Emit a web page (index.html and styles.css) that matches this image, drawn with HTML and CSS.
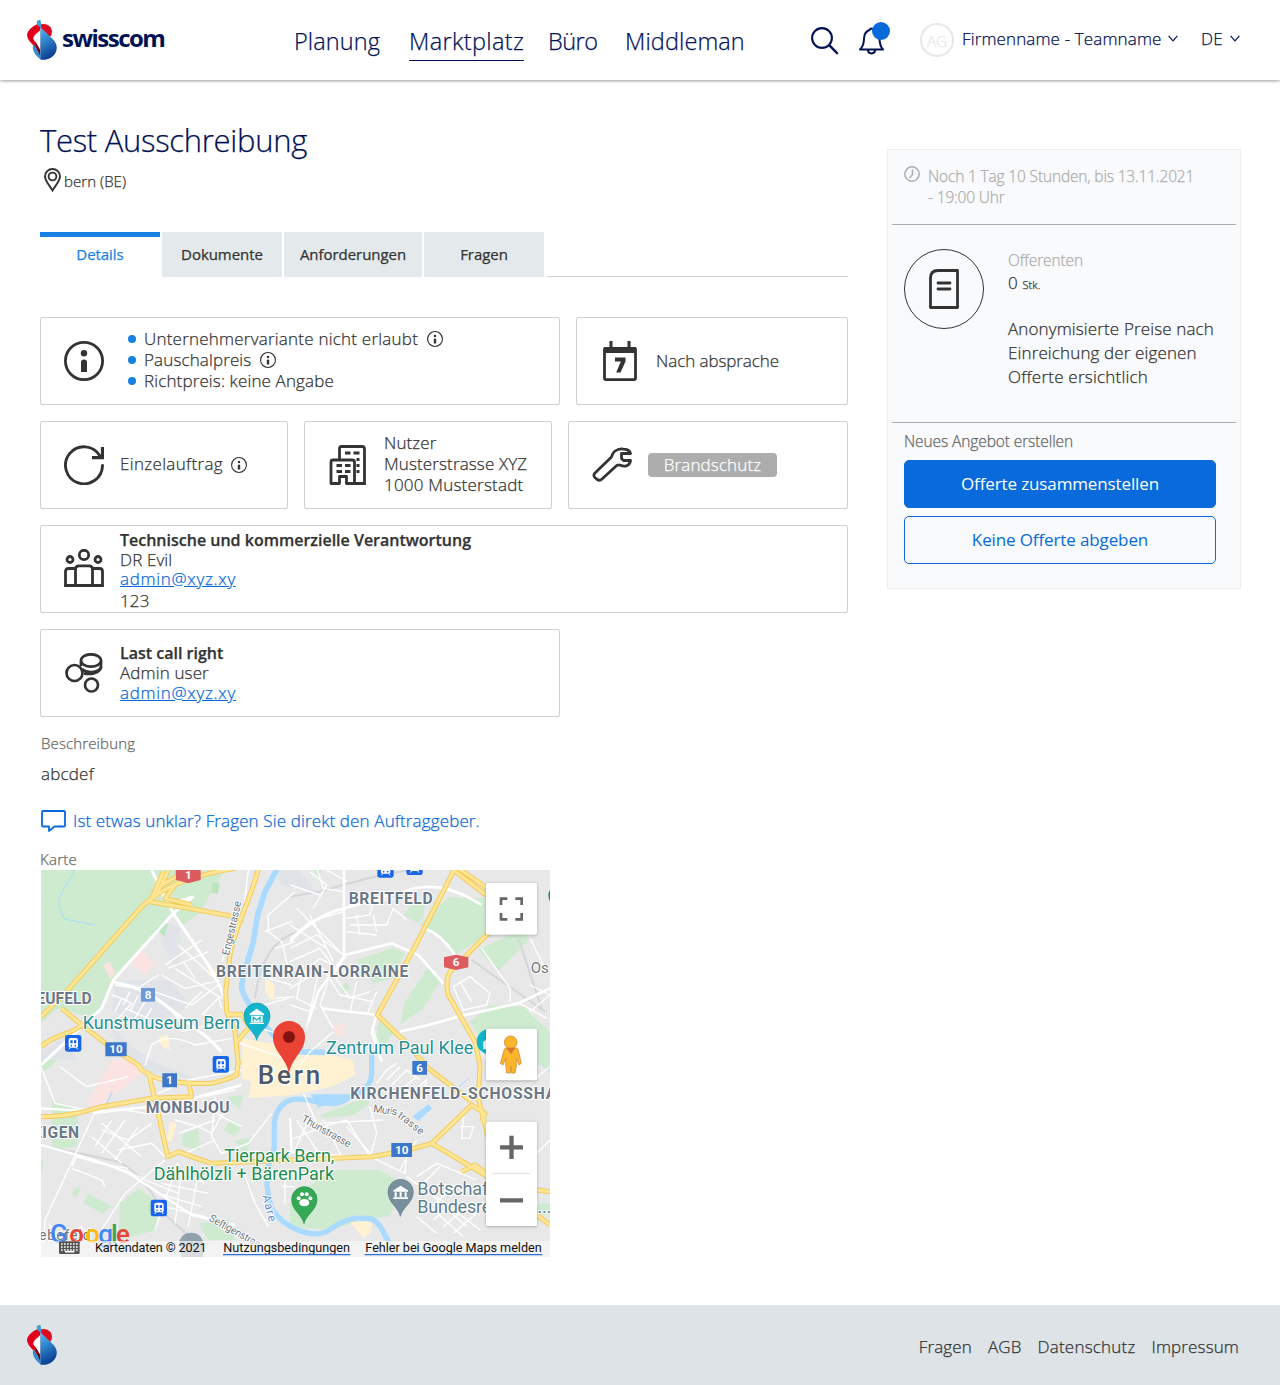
FILE: index.html
```html
<!DOCTYPE html>
<html lang="de">
<head>
<meta charset="utf-8">
<title>Test Ausschreibung</title>
<link rel="stylesheet" href="styles.css">
</head>
<body>
<svg class="defs" width="0" height="0">
  <defs>
    <linearGradient id="blue" x1="0" y1="0" x2="0.3" y2="1"><stop offset="0" stop-color="#5cb8ea"/><stop offset=".45" stop-color="#2f86cc"/><stop offset="1" stop-color="#0a3f93"/></linearGradient>
    <symbol id="logo" viewBox="81 60 90 120">
      <path d="M118 72C104 72 82 90 81 105C82 122 98 130 106 146L121 160V84Z" fill="#e2001a"/>
      <path d="M116 76C134 66 156 76 156 96Q156 106 150 111L121 84Z" fill="#dd0b22"/>
      <path d="M121 90C112 100 100 106 100 116C102 124 110 126 112 136L121 150Z" fill="#fff"/>
      <path d="M100 132C96 144 99 160 121 178V164C112 156 110 142 100 132Z" fill="#2f8fd4"/>
      <path d="M103 126C116 136 120 146 121 166C112 158 114 144 103 126Z" fill="#5e0a10"/>
      <path d="M121 82L158 117C174 132 174 152 160 167C149 178 132 181 121 179Z" fill="url(#blue)"/>
      <path d="M110 66C111 60 122 58 122 62L125 88L119 80C113 78 110 72 110 66Z" fill="#3f9fd8"/>
    </symbol>
    <symbol id="info" viewBox="0 0 40 40">
      <circle cx="20" cy="20" r="18.6" fill="none" stroke="currentColor" stroke-width="2.8"/>
      <circle cx="20" cy="12.3" r="3.2"/><path d="M17 31V21Q17 18.5 20 18.5T23 21V31Z"/>
    </symbol>
    <symbol id="chev" viewBox="0 0 10 7"><path d="M.6 .8L5 5.8L9.4 .8" fill="none" stroke="currentColor" stroke-width="1.2"/></symbol>
  </defs>
</svg>

<header class="header">
  <a class="brand"><svg class="brand-mark"><use href="#logo"/></svg><span class="brand-name">swisscom</span></a>
  <nav class="nav">
    <a>Planung</a><a class="nav-active">Marktplatz</a><a class="nav-tight">Büro</a><a>Middleman</a>
  </nav>
  <div class="tools">
    <svg class="search" viewBox="0 0 28 28" fill="none" stroke="currentColor" stroke-width="2.1"><circle cx="11" cy="11" r="9.9"/><path d="M18.2 18.2L26.8 26.8" stroke-width="2.4"/></svg>
    <div class="bell"><svg viewBox="0 0 28 30" fill="none" stroke="currentColor" stroke-width="2"><path d="M2 23.500H25C21.500 20 21.800 16 21.300 11C20.600 6 18 4.500 15.500 4C14.500 2 12.500 2 11.500 4C9 5 6.600 7 6.200 11C5.700 17 5.500 20 2 23.500Z" stroke-linejoin="round"/><path d="M10 24C10 28.500 17 28.500 17 24"/></svg><i class="badge"></i></div>
    <span class="avatar">AG</span>
    <a class="account"><span>Firmenname - Teamname</span><svg class="chev"><use href="#chev"/></svg></a>
    <a class="lang"><span>DE</span><svg class="chev"><use href="#chev"/></svg></a>
  </div>
</header>

<main class="page">
  <section class="content">
    <h1 class="title">Test Ausschreibung</h1>
    <p class="place"><svg class="pin" viewBox="0 0 17 24" fill="none" stroke="currentColor" stroke-width="1.900"><path d="M8.500 22.500C6 18 1 13 1 8.500A7.500 7.500 0 0 1 16 8.500C16 13 11 18 8.500 22.500Z"/><circle cx="8.500" cy="8.500" r="3.900"/></svg><span>bern (BE)</span></p>
    <nav class="tabs">
      <a class="tab tab-on">Details</a><a class="tab">Dokumente</a><a class="tab tab-wide">Anforderungen</a><a class="tab">Fragen</a><i class="tabs-line"></i>
    </nav>

    <div class="cards">
      <div class="row row-a">
        <article class="card"><svg class="icon"><use href="#info"/></svg>
          <ul class="facts"><li class="spaced">Unternehmervariante nicht erlaubt<svg class="hint"><use href="#info"/></svg></li><li>Pauschalpreis<svg class="hint"><use href="#info"/></svg></li><li>Richtpreis: keine Angabe</li></ul>
        </article>
        <article class="card"><svg class="icon" viewBox="0 0 40 40"><path d="M4.500 8H35.500V37Q35.500 38.600 34 38.600H6Q4.500 38.600 4.500 37Z" fill="none" stroke="currentColor" stroke-width="2.800" stroke-linejoin="round"/><path d="M4 6H36V12H4ZM9.500 0H12.500V7H9.500ZM27.500 0H30.500V7H27.500Z"/><path d="M15 16.500H25.500V20.500L20.500 31.500H16.200L20.800 20.500H15Z"/></svg><p class="tight">Nach absprache</p></article>
      </div>
      <div class="row row-b">
        <article class="card"><svg class="icon" viewBox="0 0 40 40" fill="none" stroke="currentColor" stroke-width="2.900"><path d="M38.500 20.500A18.500 18.500 0 1 1 36 11" stroke-linecap="round"/><path d="M38.500 2V12.700H28" stroke-width="3.200"/></svg><p class="job">Einzelauftrag<svg class="hint"><use href="#info"/></svg></p></article>
        <article class="card"><svg class="icon" viewBox="0 0 40 40" fill="none" stroke="currentColor" stroke-width="2.800"><path d="M11.500 14V3.500Q11.500 1.500 13.500 1.500H34Q36.500 1.500 36.500 4V38.500H26.500"/><path d="M3 38.500V17Q3 15 5 15H24Q26.500 15 26.500 17V38.500H18.500V31.500H11.500V38.500Z" stroke-linejoin="round"/><path d="M17 8H22.500M25.500 8H31.500M28.500 14.500H31.500M28.500 20.500H31.500M28.500 26.500H31.500M8.500 20.500H14M17 20.500H22.500M8.500 26.500H14M17 26.500H22.500"/></svg><p class="address">Nutzer<br>Musterstrasse XYZ<br><span class="spaced">1000 Musterstadt</span></p></article>
        <article class="card"><svg class="icon" viewBox="0 0 40 40" fill="none" stroke="currentColor" stroke-width="2.800" stroke-linejoin="round"><path d="M38.500 8.500H29.500V13.500L31.500 15.500H38.500C38 20 33.500 22.500 28.500 20.200H25L10 34C8 36 6 35.500 4 33.500Q0 30.500 3.500 27.500L19.500 12C21 6 26 3.500 31 4C35 4.300 38 5.500 38.500 8.500Z"/></svg><p class="tag">Brandschutz</p></article>
      </div>
      <div class="row">
        <article class="card contact"><svg class="icon" viewBox="0 0 40 40" fill="none" stroke="currentColor" stroke-width="2.800"><circle cx="20" cy="6" r="4.700"/><circle cx="6" cy="10.500" r="3"/><circle cx="34" cy="10.500" r="3"/><path d="M11.500 36V20Q11.500 16.800 15 16.800H25Q28.500 16.800 28.500 20V36M11 19.500H4.500Q1.500 19.500 1.500 22.500V36.500H38.500V22.500Q38.500 19.500 35.500 19.500H29"/></svg><div class="lead"><b>Technische und kommerzielle Verantwortung</b><span>DR Evil</span><a>admin@xyz.xy</a><span>123</span></div></article>
      </div>
      <div class="row row-d">
        <article class="card contact"><svg class="icon" viewBox="0 0 40 40" fill="none" stroke="currentColor" stroke-width="2.700"><circle cx="10.500" cy="20" r="8"/><circle cx="27.500" cy="32" r="6.500"/><ellipse cx="27" cy="7.500" rx="10" ry="6.200"/><path d="M37 8V13C37 19 24 21.500 18 16M37 13V15C35 20 27 22 20 20.500M17 8V13"/></svg><div class="lastcall"><b>Last call right</b><span>Admin user</span><a>admin@xyz.xy</a></div></article>
      </div>
    </div>

    <h2 class="label desc-label">Beschreibung</h2>
    <p class="desc">abcdef</p>
    <a class="ask"><svg viewBox="0 0 25 22" fill="none" stroke="currentColor" stroke-width="1.800" stroke-linejoin="round"><path d="M2 1H23Q24 1 24 2V15.500Q24 16.500 23 16.500H13.500L8 21V16.500H2Q1 16.500 1 15.500V2Q1 1 2 1Z"/></svg><span>Ist etwas unklar? Fragen Sie direkt den Auftraggeber.</span></a>
    <h2 class="label map-label">Karte</h2>

    <svg class="map" viewBox="18 15 1527 1161">
      <rect x="18" y="15" width="1527" height="1161" fill="#e8e8e8"/>
      <g class="green">
        <path d="M18 15H570L525 90L495 145L440 182L415 145L235 345L200 430L160 460L110 440L70 430L18 475Z"/>
        <path d="M362 190L395 175L425 200L418 224L385 212ZM410 230L425 218L438 235L425 250ZM532 55L555 52L548 88L530 82Z" fill="#b9e6bf"/>
        <g transform="translate(765)">
          <path d="M340 150L370 115L405 115L400 160L385 175ZM475 97L590 100V210L500 268L445 205L390 180ZM565 255L680 200L720 220L625 318ZM200 285L310 248L345 265L310 340L250 355ZM150 370L170 350L180 370L160 385ZM330 480L345 410L415 305L450 350L400 430ZM540 470L600 420L700 425L780 500V600H600L570 520ZM260 490L275 455L325 500L270 530ZM250 500L300 520L270 560ZM70 15H95L85 40Z"/>
        </g>
        <g transform="translate(0 585)">
          <path d="M50 120L130 150L125 260L50 265ZM18 0L70 0L20 40ZM18 290Q30 320 20 340ZM125 380L138 390L122 412L110 400ZM160 400L230 440L205 462L145 430ZM255 430L310 385L365 425V510L250 540ZM440 225L490 205L495 270L445 260ZM565 210L590 180L620 200L600 230ZM575 110L625 105L615 150ZM600 240L650 235L630 290ZM490 490L585 480L600 540H520Z"/>
        </g>
        <g transform="translate(765 585)"><path d="M80 360L130 330H270L335 370L300 470L235 475L120 510L0 500V430ZM90 165L220 115L240 130L190 165L110 175ZM740 0H780V40ZM745 430H780V465H740Z"/></g>
      </g>
      <g fill="#fbe3e1">
        <path d="M300 270L325 258L358 300L330 330L295 300ZM205 300L225 290L240 325L225 340ZM230 585L310 585L330 620L235 690L190 730L155 715ZM890 485L930 475L925 510L900 512Z"/>
      </g>
      <g fill="#e0e3e8"><path d="M400 170L435 190V330L410 290L380 240ZM240 345L400 345L470 420L360 480L230 440ZM230 490L340 585L480 640L340 625L250 560ZM18 560L80 520L130 585H18ZM720 15H790L850 90L740 60Z"/></g>
      <g fill="#fff2d3">
        <path d="M620 520L765 545L955 585L960 630L890 665L770 690L640 700L650 650L620 640ZM690 340L720 360L715 410L690 380ZM405 770L425 775L410 830L395 825ZM370 515L400 510L405 555L380 545ZM945 1070L1010 1070V1100L985 1120Z"/>
      </g>
      <path d="M765 95L850 80L1000 40L1120 15M1310 285L1530 440M660 400Q680 230 790 200M18 840L250 890Q330 930 380 1040L470 1120M1450 220L1520 430" fill="none" stroke="#d4d6d9" stroke-width="6"/>
      <g fill="none" stroke="#aadaff">
        <path d="M118 15C100 60 65 90 72 120L88 162L180 180M1300 640L1245 690" stroke-width="3"/>
        <path d="M725 15L690 80L668 150L655 230C640 290 620 330 620 370C635 420 680 470 715 510L770 560L870 562" stroke-width="17"/>
        <path d="M1010 560V625C1010 680 950 690 930 705C880 735 820 690 765 705C730 720 717 750 718 790V850C690 910 690 970 710 1030C745 1090 830 1120 875 1100C930 1060 960 1055 1010 1062C1050 1080 1050 1140 1090 1160H1160" stroke-width="16"/>
        <path d="M1135 755L1180 720L1188 730L1150 765ZM830 690L960 690L850 725Z" fill="#aadaff" stroke-width="4"/>
        <path d="M215 715L232 680" stroke-width="4"/>
      </g>
      <g class="minor">
        <path d="M390 300L500 225M400 310L520 260M430 240L540 340M470 220L510 290L545 350M445 290L480 340M420 310L560 400M380 330L450 370L540 350M330 370L470 420L550 360M450 430L500 380M240 360L300 370L380 410L440 470M230 390L260 400L240 440M260 400L290 415L250 460M285 380L265 420M310 390L285 440M330 410L300 460M350 430L320 480M270 430L340 460M300 375L370 330M330 600L350 540Q400 500 480 540L590 520M440 500L560 470M500 450L550 400L560 430M640 15L625 150L560 290M780 80L700 150L700 200L740 230L765 330M690 200L770 170M720 250L780 230M700 340L770 360M720 400L780 395M650 430L760 400M600 530L780 590M640 480L780 520"/>
        <g transform="translate(765)"><path d="M0 220L60 170L160 140M60 20L110 60L70 130M80 10L100 70L160 80M0 180L110 250M20 130L150 260M60 150L130 290M0 250L80 210L160 270M0 290L90 250L150 330M20 340L90 280L200 340M0 370L100 310L150 390M40 300L20 400L80 430M90 300L60 440M130 300L90 420L130 490M0 420L60 440L50 490M170 270L130 330L180 400L240 380M170 160L240 150L250 110L330 100M180 180H290L310 130L350 165M170 200L260 210M200 150L210 210M250 150L260 200M0 60L90 90M110 15L170 50M260 380L230 450M200 350L180 440M150 390L250 410M490 365L540 335L600 385L590 420L520 435ZM510 350L545 410M575 250L660 370V410M690 415L770 460M720 360L780 390L720 440M720 220L760 300M250 490L270 560M560 540L600 600M30 600L60 560L130 500"/></g>
        <g transform="translate(0 585)"><path d="M18 20L60 130L180 155M75 20L155 80L280 50M180 160L270 150L330 160H380M180 155L30 480M200 190L320 290M170 230L260 310M230 180L180 260M270 180L200 280M310 200L240 300M200 210L280 240L350 190M250 270L350 250L390 290M110 320L125 290L190 310L280 325M110 325L200 360L210 380M270 330L330 360L430 400M390 300L270 400L180 540M430 310L390 420L360 510M380 370L520 400M370 400L500 440M350 430L510 470M410 320L510 370M440 330L420 490M490 340L460 500M400 160L430 120L510 110L600 90M420 180L490 200L530 220L570 150M540 110L530 230L560 280L640 250L710 160M430 220L540 180M450 280L540 240M500 120L560 170L620 200M620 320L660 430L700 500M730 350H780M740 380H780M750 330V430M30 480L25 590M40 490L80 540L40 590M90 520L140 500L200 590M370 100L460 60L620 30"/></g>
        <g transform="translate(765 585)"><path d="M40 100L80 190L280 180M0 240L100 200L170 180L240 290L345 340L350 285M20 180L100 300M60 170L10 280M100 180L160 300M170 200L250 290M240 140L260 220L240 290M260 70L290 30L320 10M290 60L330 20M300 80L350 30L390 60M320 100L380 50M350 110L410 60L400 110M340 85L370 120M510 200L550 200L540 235H515L520 170M380 350L440 310L560 360M400 370L450 320M350 350L420 400L530 500M400 460L470 400M430 480L500 420M460 500L530 440M490 520L560 460M380 470L440 520M420 440L520 530M440 410L570 510M700 0L730 60L780 20M740 280L780 240M380 240L330 330"/></g>
      </g>
      <g fill="none" stroke="#fff" stroke-width="9">
        <path d="M350 15L415 145M475 95L415 145L235 345L200 430L18 600M235 350L330 375L430 450L520 520L560 560M415 145L540 330L570 400M475 95L430 110L380 90"/>
        <path d="M927 15V275L850 380L820 470M765 230Q840 150 927 130L1140 70Q1230 50 1340 120M860 430L940 440L1030 450M930 270L1070 235L1150 270L1225 355M1095 500L1180 480L1270 455L1450 415L1545 370M1170 190Q1220 210 1260 270M1025 450L1010 500L1040 590" stroke-width="8"/>
        <path d="M18 840Q240 900 290 930L470 1050L600 1080M765 760L770 860L1010 880M18 730L190 740L400 720L620 660" stroke-width="7"/>
      </g>
      <g class="major" fill="none">
        <g id="roads">
          <path d="M18 455L90 385L320 125C380 70 450 35 600 10M18 545C60 505 110 510 140 480M80 430L140 480L225 545L310 600C330 640 420 660 530 655Q590 640 605 630L610 585M670 10C650 100 600 180 585 270L572 380L575 440L600 500L610 600M345 110L460 130L600 155Q625 160 615 170M385 20L350 100M400 15L365 90M420 60L390 100L470 120M460 15L380 60M580 448H620L640 480M605 530L640 490"/>
          <path d="M1260 10L1140 245L1027 450L1110 530L1180 610L1310 710M1270 10L1365 75M1255 15L1360 95M1365 200L1245 320Q1230 350 1240 390L1320 530L1335 600L1330 700L1360 820M18 755C100 755 150 740 200 725L350 700L470 695L460 650M340 620L375 770L398 875L430 860Q480 880 530 895L1010 875L1120 855L1190 835L1310 720L1350 745L1340 770M1190 835L1350 930L1545 1080M1280 920L1320 900L1400 960L1545 980"/>
        </g>
        <use href="#roads" class="major-in"/>
      </g>
      <rect x="18" y="1128" width="1527" height="48" fill="#f3f3f3" opacity=".75"/>

      <g class="area">
        <text x="4" y="418" textLength="166">EUFELD</text><text x="543" y="335" textLength="577">BREITENRAIN-LORRAINE</text><text x="941" y="117" textLength="252">BREITFELD</text><text x="332" y="743" textLength="252">MONBIJOU</text><text x="-6" y="820" textLength="138">EIGEN</text><text x="946" y="703" textLength="618">KIRCHENFELD-SCHOSSHA</text>
      </g>
      <g class="poi">
        <text x="143" y="491" textLength="472">Kunstmuseum Bern</text><text x="873" y="566" textLength="442">Zentrum Paul Klee</text>
        <g fill="#1e8e4e"><text x="568" y="891" textLength="330">Tierpark Bern,</text><text x="356" y="946" textLength="541">Dählhölzli + BärenPark</text></g>
        <g fill="#607d8b"><text x="1147" y="990" textLength="230">Botschaft</text><text x="1147" y="1045" textLength="402">Bundesrepublik...</text></g>
      </g>
      <text class="city" x="668" y="656" textLength="188">Bern</text>
      <g class="street">
        <text transform="translate(582 272) rotate(-77)" textLength="165">Engestrasse</text>
        <text transform="translate(797 768) rotate(29)" textLength="165">Thunstrasse</text>
        <text transform="translate(1014 741) rotate(8)" textLength="72">Muris</text><text transform="translate(1086 755) rotate(38)" textLength="90">trasse</text>
        <text transform="translate(520 1066) rotate(29)" textLength="170">Seftigenstras</text>
        <text class="river-name" transform="translate(682 992) rotate(76)" textLength="82">Aare</text>
        <text class="town" x="1487" y="325">Os</text><text class="suburb" x="12" y="1126" textLength="155">ebefeld</text>
      </g>
      <g class="shield">
        <path d="M422 15H497V45L460 55L423 45ZM1227 277L1263 269L1300 277V307L1263 315L1227 307Z" fill="#db5b5e"/>
        <path d="M318 369H360V410H318Z" fill="#6d9ad8"/><path d="M211 532H275V574H211ZM382 625H426V667H382ZM1132 588H1176V629H1132ZM1069 834H1131V876H1069Z" fill="#3d77cb"/>
        <text x="460" y="43">1</text><text x="1263" y="304">6</text><text x="339" y="402">8</text><text x="243" y="565">10</text><text x="404" y="658">1</text><text x="1154" y="620">6</text><text x="1100" y="867">10</text>
      </g>
      <g id="train"><rect x="90" y="510" width="49" height="50" rx="7" fill="#1a66ea"/><path d="M101 524Q101 519 107 519H122Q129 519 129 525V544Q129 548 123 548H106Q101 548 101 544Z" fill="#fff"/><path d="M106 526H113V535H106ZM117 526H124V535H117Z" fill="#1a66ea"/><circle cx="109" cy="542" r="2.500" fill="#1a66ea"/><circle cx="121" cy="542" r="2.500" fill="#1a66ea"/><path d="M106 547L102 553M124 547L128 553" stroke="#fff" stroke-width="3"/></g>
      <use href="#train" x="443" y="63"/><use href="#train" x="257" y="494"/><use href="#train" x="937" y="-522"/><use href="#train" x="1024" y="-530"/>

      <path d="M665 526C659 498 627 486 627 453A38 38 0 0 1 705 453C705 486 671 498 665 526Z" fill="#12b5cb" stroke="#0d97aa" stroke-width="2"/>
      <path d="M644 446L665 431L687 446V451H644ZM648 453H683V472H648ZM644 473H687V477H644Z" fill="#fff"/><path d="M655 469V457L665 465L675 457V469" fill="none" stroke="#12b5cb" stroke-width="4"/>
      <circle cx="1363" cy="530" r="38" fill="#12b5cb"/><path d="M1345 530L1363 518V553H1345Z" fill="#fff"/>
      <path d="M807 1076C801 1048 770 1036 770 1003A38 38 0 0 1 846 1003C846 1036 813 1048 807 1076Z" fill="#34a853" stroke="#1e8e4e" stroke-width="2"/><g fill="#fff"><ellipse cx="808" cy="1013" rx="15" ry="11"/><circle cx="791" cy="1000" r="6"/><circle cx="801" cy="988" r="6"/><circle cx="815" cy="988" r="6"/><circle cx="826" cy="1000" r="6"/></g>
      <path d="M1096 1054C1090 1026 1059 1014 1059 981A38 38 0 0 1 1135 981C1135 1014 1102 1026 1096 1054Z" fill="#78909c" stroke="#607d8b" stroke-width="2"/><path d="M1075 976L1097 962L1119 976V980H1075ZM1079 982H1085V996H1079ZM1094 982H1100V996H1094ZM1109 982H1115V996H1109ZM1075 997H1119V1002H1075Z" fill="#fff"/>
      <path d="M433 1128A38 38 0 0 1 504 1128V1176H440Z" fill="#78909c" opacity=".8"/>
      <path d="M762 626C755 580 714 560 714 516A48 48 0 0 1 810 516C810 560 769 580 762 626Z" fill="#ea4335"/><circle cx="762" cy="516" r="18" fill="#811411"/>
      <path d="M1545 75Q1535 90 1545 110Z" fill="#1e8e4e"/>

      <g class="google"><text x="45" y="1134" fill="#4285f4">G</text><text x="103" y="1134" fill="#ea4335">o</text><text x="150" y="1134" fill="#fbbc04">o</text><text x="190" y="1134" fill="#4285f4">g</text><text x="228" y="1134" fill="#34a853">l</text><text x="243" y="1134" fill="#ea4335">e</text></g>
      <rect x="18" y="1128" width="1527" height="48" fill="#f3f3f3" opacity=".7"/>
      <rect x="72" y="1129" width="62" height="38" rx="3" fill="#555"/><path d="M78 1137H130M78 1146H130M78 1155H130" stroke="#fff" stroke-width="5" stroke-dasharray="5 4"/><path d="M90 1160H118" stroke="#fff" stroke-width="5"/>
      <g class="legal"><text x="180" y="1161" textLength="335">Kartendaten © 2021</text><text x="565" y="1161" textLength="380">Nutzungsbedingungen</text><text x="991" y="1161" textLength="529">Fehler bei Google Maps melden</text></g>
      <path d="M564 1169H946M989 1169H1522" stroke="#2d72d9" stroke-width="4"/>

      <g class="ctl"><rect x="1353" y="54" width="153" height="155" rx="5"/><rect x="1353" y="491" width="153" height="155" rx="5"/><rect x="1353" y="770" width="153" height="313" rx="5"/></g>
      <path d="M1398 120V101H1417M1441 101H1460V120M1460 144V163H1441M1417 163H1398V144" fill="none" stroke="#666" stroke-width="8"/>
      <path d="M1395 847H1464M1429.500 812V882M1395 1006H1464" stroke="#666" stroke-width="13"/><path d="M1371 925H1487" stroke="#e0e0e0" stroke-width="3"/>
      <g stroke="#c77f2b" stroke-width="2"><path d="M1408 552Q1410 548 1418 548H1438Q1447 548 1449 552L1459 595L1452 600L1444 580V602L1440 624H1430L1428 604L1426 624H1415L1412 600V580L1404 600L1396 595Z" fill="#fbb62c"/><circle cx="1427" cy="532" r="19" fill="#fbb62c"/><path d="M1415 549H1440L1428 566Z" fill="#e0752d"/></g>
    </svg>
  </section>

  <aside class="side">
    <div class="deadline"><svg viewBox="0 0 16 16" fill="none" stroke="currentColor" stroke-width="1.500"><circle cx="8" cy="8" r="7.200"/><path d="M8.500 3.500V8.500L5.500 12"/></svg><p>Noch 1 Tag 10 Stunden, bis 13.11.2021<br>- 19:00 Uhr</p></div>
    <div class="offers">
      <div class="ring"><svg viewBox="0 0 30 40" fill="none" stroke="currentColor" stroke-width="2.800" stroke-linejoin="round"><path d="M1.500 38.500V9Q1.500 1.500 9 1.500H28.500V38.500Z"/><path d="M9 14H21M9 20H21" stroke-linecap="round"/></svg></div>
      <div><p class="muted">Offerenten</p><p class="count">0 <small>Stk.</small></p><p class="note">Anonymisierte Preise nach<br>Einreichung der eigenen<br><span class="spaced">Offerte ersichtlich</span></p></div>
    </div>
    <div class="actions"><p>Neues Angebot erstellen</p><button class="btn primary">Offerte zusammenstellen</button><button class="btn">Keine Offerte abgeben</button></div>
  </aside>
</main>

<footer class="footer"><svg class="brand-mark"><use href="#logo"/></svg><nav><a>Fragen</a><a>AGB</a><a class="spaced">Datenschutz</a><a>Impressum</a></nav></footer>
</body>
</html>
```
FILE: styles.css
```css
* { box-sizing: border-box; }
body { margin: 0; background: #fff; color: #333; font-family: "Open Sans", "Noto Sans", sans-serif; font-size: 17px; font-weight: 300; letter-spacing: .13px; line-height: 21px; -webkit-text-stroke: .25px; }
h1, h2, p, ul { margin: 0; padding: 0; font-weight: inherit; }
.defs { position: absolute; }
svg { display: block; flex: none; }
.spaced { letter-spacing: .22px; }
.tight { letter-spacing: -.07px; margin-top: -2px; }

.header { display: flex; height: 80px; color: #001155; box-shadow: 0 1px 3px rgba(0, 0, 0, .4); }
.brand { display: flex; width: 294px; padding: 20px 0 0 27px; }
.brand-mark { width: 30px; height: 40px; -webkit-text-stroke: 0; }
.brand-name { margin-left: 5px; font-size: 24px; font-weight: 700; line-height: 35px; letter-spacing: -1.5px; -webkit-text-stroke: 0; }
.nav { display: grid; grid-template-columns: 115px 139px 77px 186px; align-items: start; justify-items: start; width: 517px; padding-top: 23px; font-size: 23.500px; line-height: 36px; letter-spacing: .1px; }
.nav a { height: 38px; }
.nav .nav-active { border-bottom: 1px solid #001155; letter-spacing: .36px; }
.nav .nav-tight { letter-spacing: -.5px; }
.tools { display: flex; flex: 1; }
.search { width: 28px; height: 28px; margin-top: 27px; }
.bell { position: relative; width: 28px; height: 30px; margin: 26px 0 0 19px; }
.badge { position: absolute; left: 14px; top: -4px; width: 18px; height: 18px; border-radius: 50%; background: #086adb; }
.avatar { width: 34px; height: 34px; margin: 23px 0 0 34px; border: 2px solid #e4e9ec; border-radius: 50%; color: #e4e9ec; font-size: 15px; line-height: 32px; text-align: center; }
.account, .lang { display: flex; align-items: center; height: 24px; margin: 26px 0 0 8px; }
.account { width: 216px; justify-content: space-between; }
.lang { width: 39px; margin-left: 23px; justify-content: space-between; }
.chev { width: 10px; height: 7px; }

.page { display: flex; gap: 39px; height: 1225px; padding-left: 40px; }
.content { width: 808px; }
.title { height: 84px; padding-top: 37px; color: #001155; font-size: 31px; line-height: 46px; letter-spacing: -.29px; }
.place { display: flex; height: 24px; margin: 4px 0 40px 4px; gap: 3px; font-size: 15px; line-height: 27px; letter-spacing: .05px; }
.pin { width: 17px; height: 24px; }
.tabs { display: flex; gap: 2px; height: 45px; }
.tab { width: 120px; background: #e4e9eb; font-size: 15px; font-weight: 400; line-height: 45px; letter-spacing: -.05px; text-align: center; }
.tab-wide { width: 138px; }
.tab-on { border-top: 5px solid #1781e3; background: none; color: #1781e3; line-height: 35px; }
.tabs-line { flex: 1; margin-left: 1px; border-bottom: 1px solid #d0d0d0; }

.cards { display: grid; gap: 16px; margin-top: 40px; }
.row { display: grid; gap: 16px; height: 88px; }
.row-a { grid-template-columns: 520px 1fr; }
.row-b { grid-template-columns: 248px 248px 1fr; }
.row-d { grid-template-columns: 520px; }
.card { display: flex; align-items: center; gap: 16px; padding-left: 23px; border: 1px solid #d0d0d0; border-radius: 2px; }
.icon { width: 40px; height: 40px; fill: currentColor; }
.icon[fill=none] { fill: none; }
.facts { list-style: none; padding-left: 8px; margin-top: -3px; }
.facts li { display: flex; align-items: center; }
.facts li::before { content: ""; width: 8px; height: 8px; margin-right: 8px; border-radius: 50%; background: #1781e3; }
.hint { display: inline-block; width: 16px; height: 16px; margin-left: 9px; vertical-align: -3px; fill: currentColor; -webkit-text-stroke: 0; }
.job { margin-top: -3px; letter-spacing: .34px; }
.job .hint { margin-left: 8px; }
.address { margin-top: -3px; }
.tag { width: 129px; height: 24px; border-radius: 4px; background: #adadad; color: #fff; line-height: 24px; text-align: center; }
.contact div { display: flex; flex-direction: column; align-items: flex-start; line-height: 20px; }
.contact .lead { margin-top: 2px; }
.contact b { font-size: 16px; font-weight: 600; letter-spacing: 0; }
.contact a { padding-bottom: 3px; color: #086adb; line-height: 18px; letter-spacing: .71px; text-decoration: underline; }
.contact .lastcall a { padding: 0; line-height: 20px; }

.label { color: #666; font-size: 15px; line-height: 20px; }
.desc-label { margin: 16px 0 0 1px; }
.desc { margin: 11px 0 0 1px; line-height: 20px; letter-spacing: .2px; }
.ask { display: flex; gap: 7px; margin: 26px 0 17px 1px; color: #086adb; line-height: 22px; }
.ask svg { width: 25px; height: 22px; }
.map-label { height: 21px; letter-spacing: .25px; }
.map { width: 509px; height: 387px; margin-left: 1px; font-family: Roboto, sans-serif; letter-spacing: 0; }
.green { fill: #ceebd0; }
.minor { fill: none; stroke: #fff; stroke-width: 4; }
.major { stroke: #f3cb5c; stroke-width: 15; stroke-linejoin: round; }
.major-in { stroke: #ffe694; stroke-width: 9; }
.map text { paint-order: stroke; stroke: #fff; stroke-width: 6px; stroke-linejoin: round; -webkit-text-stroke: 6px #fff; }
.area { fill: #6b7787; font-size: 47px; font-weight: 700; }
.poi { fill: #1f8f96; font-size: 54px; font-weight: 400; }
.city { fill: #4e5968; font-size: 78px; font-weight: 500; }
.street { fill: #6f767c; font-size: 32px; font-weight: 400; }
.river-name { fill: #5b8dd0; font-size: 35px; }
.town { font-size: 45px; }
.suburb { font-size: 42px; }
.map .shield text, .map .legal text, .map .google text { stroke: none; -webkit-text-stroke: 0; }
.shield text { fill: #fff; font-size: 35px; font-weight: 700; text-anchor: middle; }
.google { font-size: 78px; font-weight: 500; }
.legal { fill: #111; font-size: 38px; font-weight: 400; }
.ctl { fill: #fff; filter: drop-shadow(0 2px 4px rgba(0, 0, 0, .3)); }

.side { width: 354px; height: 440px; margin-top: 69px; padding: 0 4px; border: 1px solid #efefef; background: #f9fafc; }
.deadline { display: flex; gap: 8px; height: 75px; padding: 16px 0 0 12px; border-bottom: 1px solid #a9abae; color: #adadad; font-size: 15.500px; letter-spacing: -.16px; }
.deadline svg { width: 16px; height: 16px; }
.offers { display: flex; gap: 24px; height: 198px; padding: 24px 0 0 12px; border-bottom: 1px solid #a9abae; line-height: 24px; }
.ring { display: flex; align-items: center; justify-content: center; width: 80px; height: 80px; border: 1px solid #333; border-radius: 50%; }
.ring svg { width: 30px; height: 40px; }
.muted { color: #adadad; font-size: 15.500px; line-height: 22px; letter-spacing: -.12px; }
.count { height: 24px; line-height: 23px; }
.count small { font-size: 11px; }
.note { margin-top: 22px; }
.actions { padding: 8px 0 0 12px; }
.actions p { height: 29px; color: #666; font-size: 15.500px; letter-spacing: -.1px; }
.btn { display: block; width: 312px; height: 48px; margin-bottom: 8px; padding: 0 0 2px; border: 1px solid #086adb; border-radius: 5px; background: none; color: #086adb; font: inherit; font-weight: 400; letter-spacing: -.12px; -webkit-text-stroke: 0; }
.primary { background: #086adb; color: #fff; }

.footer { display: flex; justify-content: space-between; height: 80px; padding: 20px 41px 0 27px; background: #dde3e7; }
.footer nav { display: flex; gap: 16px; line-height: 44px; }
```
